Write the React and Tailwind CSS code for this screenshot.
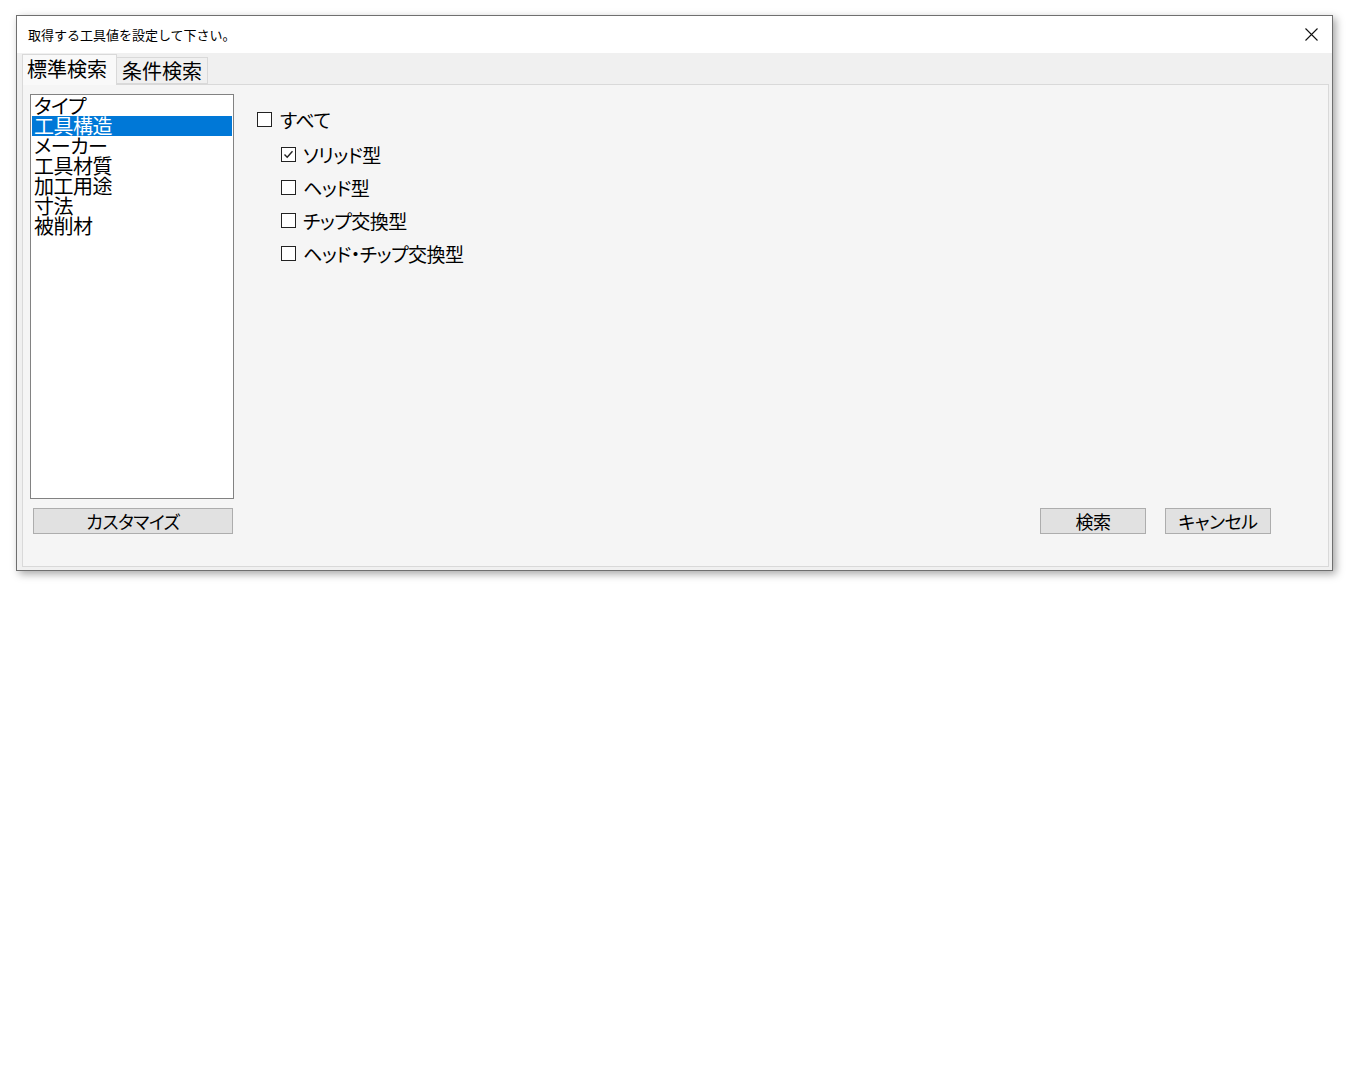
import React, { useState } from "react";

const jp = "font-['Noto_Sans_CJK_JP','Noto_Sans',sans-serif]";
const palt = "[font-feature-settings:'palt']";

const listItems = ["タイプ", "工具構造", "メーカー", "工具材質", "加工用途", "寸法", "被削材"];
const subOptions = [
  { label: "ソリッド型", checked: true },
  { label: "ヘッド型", checked: false },
  { label: "チップ交換型", checked: false },
  { label: "ヘッド・チップ交換型", checked: false },
];

const CheckBox = ({ checked }) => (
  <span className="flex h-[15px] w-[15px] shrink-0 items-center justify-center border-[1.5px] border-[#222] bg-white">
    {checked && (
      <svg width="11" height="11" viewBox="0 0 11 11">
        <path d="M1.5 5.5 L4.2 8.2 L9.5 2.3" fill="none" stroke="#222" strokeWidth="1.4" />
      </svg>
    )}
  </span>
);

const Button = ({ children, className }) => (
  <button
    className={`flex h-[26px] items-center justify-center border border-[#adadad] bg-[#e1e1e1] text-[18px] leading-none tracking-[-0.5px] text-black ${palt} ${className}`}
  >
    {children}
  </button>
);

const App = () => {
  const [selected, setSelected] = useState(1);

  return (
    <div className={`h-[1067px] w-[1350px] bg-white pl-[16px] pt-[15px] ${jp}`}>
      <div className="flex h-[556px] w-[1317px] flex-col border border-[#6f6f6f] bg-[#f0f0f0] shadow-[3px_3px_8px_rgba(0,0,0,0.35)]">
        {/* title bar */}
        <div className="flex h-[37px] shrink-0 items-center justify-between bg-white pb-[1px] pl-[11px] pr-[14px]">
          <span className="text-[13px] leading-none text-black">取得する工具値を設定して下さい。</span>
          <svg width="13" height="13" viewBox="0 0 13 13">
            <path d="M0.5 0.5 L12.5 12.5 M12.5 0.5 L0.5 12.5" stroke="#111" strokeWidth="1.1" />
          </svg>
        </div>

        {/* tabs */}
        <div className="flex h-[31px] shrink-0 items-end pl-[5px]">
          <div className="relative z-10 -mb-[1px] flex h-[31px] w-[95px] items-center border border-b-0 border-[#d9d9d9] bg-[#f9f9f9] pb-[3px] pl-[4px] text-[20px] leading-none text-black">
            標準検索
          </div>
          <div className="flex h-[27px] w-[91px] items-center justify-center border border-l-0 border-[#d9d9d9] bg-[#f0f0f0] text-[20px] leading-none text-black">
            条件検索
          </div>
        </div>

        {/* panel */}
        <div className="mb-[3px] ml-[5px] mr-[3px] flex flex-1 flex-col border border-[#d9d9d9] bg-[#f5f5f5] pl-[7px] pt-[9px]">
          <div className="flex">
            <div className="h-[405px] w-[204px] border border-[#828282] bg-white p-[1px]">
              {listItems.map((item, i) => (
                <div
                  key={item}
                  onClick={() => setSelected(i)}
                  className={`h-[20px] pl-[2px] text-[20px] leading-[20px] tracking-[-0.5px] ${palt} ${
                    i === selected ? "bg-[#0078d7] text-white" : "text-black"
                  }`}
                >
                  {item}
                </div>
              ))}
            </div>

            <div className={`ml-[23px] pt-[9px] text-[19px] leading-none tracking-[-0.5px] text-black ${palt}`}>
              <div className="flex h-[33px] items-center gap-[8px]">
                <CheckBox checked={false} />
                <span>すべて</span>
              </div>
              <div className="mt-[2px] pl-[24px]">
                {subOptions.map((o) => (
                  <div key={o.label} className="flex h-[33px] items-center gap-[7px]">
                    <CheckBox checked={o.checked} />
                    <span>{o.label}</span>
                  </div>
                ))}
              </div>
            </div>
          </div>

          <div className="mt-[9px] flex items-center justify-between pr-[57px]">
            <Button className="ml-[3px] w-[200px]">カスタマイズ</Button>
            <div className="flex gap-[19px]">
              <Button className="w-[106px]">検索</Button>
              <Button className="w-[106px]">キャンセル</Button>
            </div>
          </div>
        </div>
      </div>
    </div>
  );
};

export default App;
